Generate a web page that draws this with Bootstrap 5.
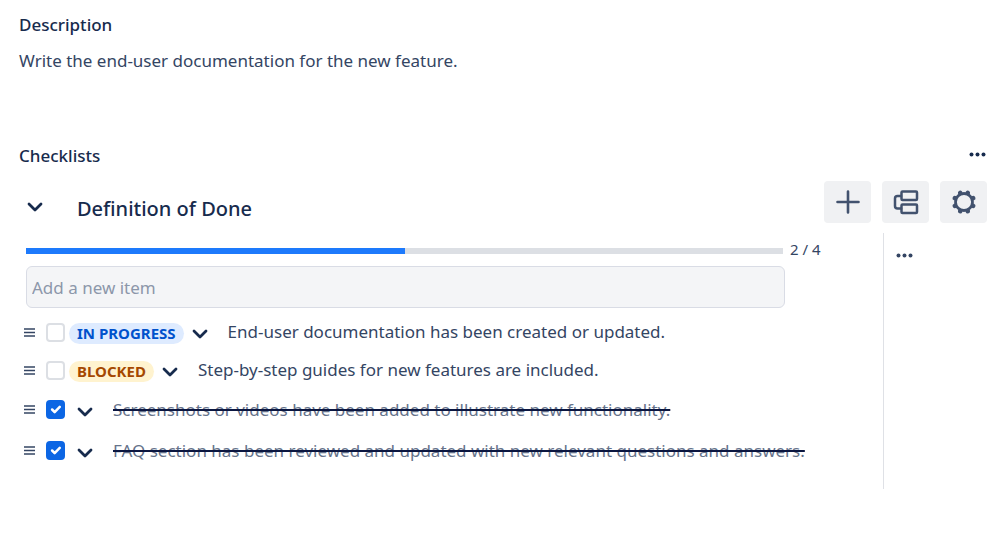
<!DOCTYPE html>
<html lang="en">
<head>
<meta charset="utf-8">
<meta name="viewport" content="width=device-width, initial-scale=1">
<title>Checklists</title>
<link href="https://cdn.jsdelivr.net/npm/bootstrap@5.3.0/dist/css/bootstrap.min.css" rel="stylesheet">
<style>
body { font-family: "Noto Sans", "Open Sans", sans-serif; font-size: 17px; line-height: 24px; color: #344563; background: #fff; }
.issue { padding: 13px 12px 48px 19px; }
.section-title { font-size: 17px; line-height: 24px; font-weight: 500; color: #172b4d; }
.list-title { font-size: 20px; line-height: 28px; font-weight: 500; color: #172b4d; }
.summary { margin-bottom: 71px; }
.plain { border: 0; background: none; padding: 0; color: #172b4d; display: flex; }
.plain svg, .tool svg { display: block; }
.more { padding: 8px 1px 11px; }
.list-head { padding: 13px 0 10px 8px; }
.head-text { gap: 34px; padding-top: 10px; }
.tools { gap: 11px; }
.tool { width: 47px; height: 42px; padding: 0; border: 0; border-radius: 4px; background: #f0f1f3; color: #42526e; }
.list-main { padding: 4px 61px 18px 7px; min-width: 0; }
.tally { gap: 7px; }
.tally .progress { height: 6px; border-radius: 0; background: #dcdfe4; margin-top: 4px; }
.tally .progress-bar { background: #1d7afc; }
.count { font-size: 15px; width: 32px; white-space: nowrap; }
.new-item { margin: 5px 37px 5px 0; }
.new-item .form-control { height: 42px; padding: 0 5px; font-size: 17px; border: 1px solid #d9dce5; border-radius: 6px; background: #f4f5f7; color: #172b4d; }
.new-item .form-control::placeholder { color: #8c97aa; opacity: 1; }
.entry { height: 38px; margin-left: -2px; }
.entry.done { height: 41px; }
.entry .form-check-input { width: 19px; height: 19px; margin: 0 4px 0 11px; border: 2px solid #dcdfe4; border-radius: 4px; flex: none; }
.entry .form-check-input:checked { background-color: #0c66e4; border-color: #0c66e4; background-size: 17px; }
.state { height: 21px; padding: 0 8px; border-radius: 11px; font-size: 15px; line-height: 21px; font-weight: 700; white-space: nowrap; margin-top: 2px; }
.state-progress { background: #deebff; color: #0052cc; }
.state-blocked { background: #fff3cf; color: #a54800; }
.entry .plain { padding: 4px 8px 0 8px; }
.entry label { padding-left: 12px; white-space: nowrap; }
.done label { color: #66738b; text-decoration: line-through 2px #0b1640; }
.side { width: 104px; flex: none; padding: 20px 12px; border-left: 1px solid #dfe1e6; }
.side .plain { color: #344563; }
</style>
</head>
<body>
<svg width="0" height="0" class="d-none" aria-hidden="true">
  <symbol id="chevron" viewBox="0 0 16 16"><path d="M2 5l6 6 6-6" fill="none" stroke="currentColor" stroke-width="2.8" stroke-linecap="round" stroke-linejoin="round"/></symbol>
  <symbol id="dots" viewBox="0 0 17 5"><g fill="currentColor"><circle cx="2.5" cy="2.5" r="2"/><circle cx="8.5" cy="2.5" r="2"/><circle cx="14.5" cy="2.5" r="2"/></g></symbol>
  <symbol id="grip" viewBox="0 0 11 9"><path d="M0 1h11M0 4.500h11M0 8h11" fill="none" stroke="#344563" stroke-width="1.700"/></symbol>
</svg>
<main class="issue">
  <section class="summary">
    <h2 class="section-title mb-0">Description</h2>
    <p class="mt-2 pt-1 mb-0">Write the end-user documentation for the new feature.</p>
  </section>
  <section>
    <div class="d-flex justify-content-between align-items-center">
      <h2 class="section-title mb-0">Checklists</h2>
      <button type="button" class="plain more" aria-label="More checklist actions"><svg width="17" height="5"><use href="#dots"/></svg></button>
    </div>
    <div class="list-head d-flex justify-content-between align-items-center">
      <div class="head-text d-flex align-items-center">
        <button type="button" class="plain" aria-label="Collapse checklist"><svg width="16" height="16"><use href="#chevron"/></svg></button>
        <h3 class="list-title mb-0 pt-1">Definition of Done</h3>
      </div>
      <div class="tools d-flex">
        <button type="button" class="tool d-flex align-items-center justify-content-center" aria-label="Add"><svg width="26" height="26" viewBox="0 0 26 26" fill="none" stroke="currentColor" stroke-width="2.6" stroke-linecap="round"><path d="M13 2.500v21M2.500 13h21"/></svg></button>
        <button type="button" class="tool d-flex align-items-center justify-content-center" aria-label="Group items"><svg width="26" height="26" viewBox="0 0 26 26" fill="none" stroke="currentColor" stroke-width="2.5" stroke-linejoin="round" stroke-linecap="round"><rect x="8.500" y="2.500" width="15.500" height="8.500" rx="1"/><rect x="8.500" y="15.500" width="15.500" height="8.500" rx="1"/><path d="M8 7H4.500Q2 7 2 9.500V17Q2 19.500 4.500 19.500H8"/></svg></button>
        <button type="button" class="tool d-flex align-items-center justify-content-center" aria-label="Settings"><svg width="26" height="26" viewBox="0 0 26 26" fill="none" stroke="currentColor"><path stroke-width="4.600" stroke-linecap="round" d="M9.500 4.600l-.3-.8M16.500 4.600l.3-.8M21.400 9.500l.8-.3M21.400 16.500l.8.3M16.500 21.400l.3.8M9.500 21.400l-.3.8M4.600 16.500l-.8.3M4.600 9.500l-.8-.3"/><circle cx="13" cy="13" r="8.500" fill="#f0f1f3" stroke-width="2.800"/></svg></button>
      </div>
    </div>
    <div class="d-flex">
      <div class="list-main flex-grow-1">
        <div class="tally d-flex align-items-center">
          <div class="progress flex-grow-1" role="progressbar" aria-label="Items done" aria-valuenow="2" aria-valuemin="0" aria-valuemax="4"><div class="progress-bar" style="width: 50%"></div></div>
          <span class="count">2 / 4</span>
        </div>
        <div class="new-item"><input type="text" class="form-control" placeholder="Add a new item" aria-label="Add a new item"></div>
        <ul class="list-unstyled mb-0">
          <li class="entry d-flex align-items-center">
            <svg width="11" height="9"><use href="#grip"/></svg>
            <input class="form-check-input" type="checkbox" id="item1">
            <span class="state state-progress">IN PROGRESS</span>
            <button type="button" class="plain" aria-label="Change status"><svg width="16" height="16"><use href="#chevron"/></svg></button>
            <label for="item1">End-user documentation has been created or updated.</label>
          </li>
          <li class="entry d-flex align-items-center">
            <svg width="11" height="9"><use href="#grip"/></svg>
            <input class="form-check-input" type="checkbox" id="item2">
            <span class="state state-blocked">BLOCKED</span>
            <button type="button" class="plain" aria-label="Change status"><svg width="16" height="16"><use href="#chevron"/></svg></button>
            <label for="item2">Step-by-step guides for new features are included.</label>
          </li>
          <li class="entry done d-flex align-items-center">
            <svg width="11" height="9"><use href="#grip"/></svg>
            <input class="form-check-input" type="checkbox" id="item3" checked>
            <button type="button" class="plain" aria-label="Change status"><svg width="16" height="16"><use href="#chevron"/></svg></button>
            <label for="item3">Screenshots or videos have been added to illustrate new functionality.</label>
          </li>
          <li class="entry done d-flex align-items-center">
            <svg width="11" height="9"><use href="#grip"/></svg>
            <input class="form-check-input" type="checkbox" id="item4" checked>
            <button type="button" class="plain" aria-label="Change status"><svg width="16" height="16"><use href="#chevron"/></svg></button>
            <label for="item4">FAQ section has been reviewed and updated with new relevant questions and answers.</label>
          </li>
        </ul>
      </div>
      <div class="side"><button type="button" class="plain" aria-label="More list actions"><svg width="17" height="5"><use href="#dots"/></svg></button></div>
    </div>
  </section>
</main>
<script src="https://cdn.jsdelivr.net/npm/bootstrap@5.3.0/dist/js/bootstrap.bundle.min.js"></script>
</body>
</html>
